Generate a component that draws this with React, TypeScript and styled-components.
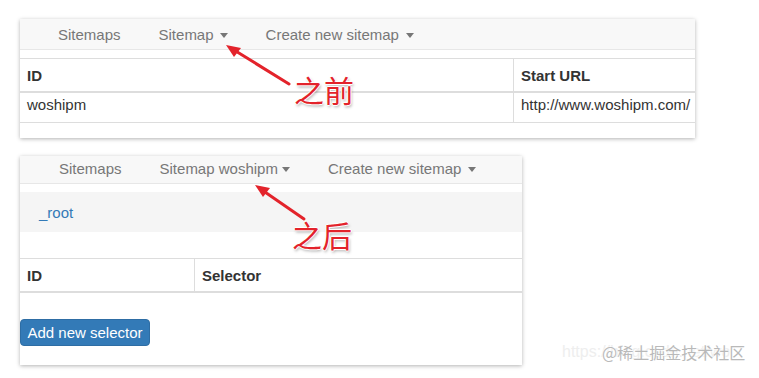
import React from 'react';
import styled, { createGlobalStyle } from 'styled-components';

const GlobalStyle = createGlobalStyle`
  html, body {
    margin: 0;
    padding: 0;
    background: #fff;
  }
  body {
    font-family: "Liberation Sans", Arial, sans-serif;
    color: #333;
  }
`;

export default function App() {
  return (
    <Page>
      <GlobalStyle />
      <Panel $w={675} $h={119}>
        <NavBar $h={30} $pad={19}>
          <NavLink>Sitemaps</NavLink>
          <NavLink>
            Sitemap<Caret $gap={6} />
          </NavLink>
          <NavLink>
            Create new sitemap<Caret $gap={7} />
          </NavLink>
        </NavBar>
        <Table $w={820} $top={8}>
          <colgroup>
            <col style={{ width: 493 }} />
            <col />
          </colgroup>
          <thead>
            <tr>
              <Th>ID</Th>
              <Th>Start URL</Th>
            </tr>
          </thead>
          <tbody>
            <tr>
              <Td>woshipm</Td>
              <Td>http://www.woshipm.com/ .</Td>
            </tr>
          </tbody>
        </Table>
      </Panel>

      <Panel $w={502} $h={209}>
        <NavBar $h={24} $pad={20} $lift={3}>
          <NavLink>Sitemaps</NavLink>
          <NavLink>
            Sitemap woshipm<Caret $gap={4} />
          </NavLink>
          <NavLink>
            Create new sitemap<Caret $gap={7} />
          </NavLink>
        </NavBar>
        <Breadcrumb>
          <Crumb>_root</Crumb>
        </Breadcrumb>
        <Table $w={502} $top={26}>
          <colgroup>
            <col style={{ width: 174 }} />
            <col />
          </colgroup>
          <thead>
            <tr>
              <Th>ID</Th>
              <Th>Selector</Th>
            </tr>
          </thead>
        </Table>
        <PrimaryButton>Add new selector</PrimaryButton>
      </Panel>

      <Arrows width="759" height="378" viewBox="0 0 759 378">
        <line x1="289" y1="84" x2="234" y2="50" />
        <polygon points="226,45 241,48 234,57" />
        <line x1="304" y1="219" x2="262" y2="190" />
        <polygon points="255,185 270,188 263,197" />
      </Arrows>
      <Note $x={294} $y={74}>之前</Note>
      <Note $x={292} $y={219}>之后</Note>

      <WatermarkUrl>https://blog.csdn.net/wo</WatermarkUrl>
      <Watermark>@稀土掘金技术社区</Watermark>
    </Page>
  );
}

const Page = styled.div`
  position: relative;
  width: 759px;
  height: 378px;
  box-sizing: border-box;
  padding: 19px 0 0 20px;
  display: flex;
  flex-direction: column;
  align-items: flex-start;
  gap: 18px;
  overflow: hidden;
`;

const Panel = styled.div<{ $w: number; $h: number }>`
  width: ${(p) => p.$w}px;
  height: ${(p) => p.$h}px;
  background: #fff;
  overflow: hidden;
  box-shadow: 0 1px 4px rgba(0, 0, 0, 0.3);
  display: flex;
  flex-direction: column;
  align-items: flex-start;
`;

const NavBar = styled.nav<{ $h: number; $pad: number; $lift?: number }>`
  align-self: stretch;
  height: ${(p) => p.$h}px;
  flex-shrink: 0;
  box-sizing: content-box;
  background: #f8f8f8;
  border-bottom: 1px solid #e7e7e7;
  display: flex;
  align-items: center;
  gap: 38px;
  padding: 0 0 ${(p) => p.$lift ?? 0}px ${(p) => p.$pad + 19}px;
  font-size: 15px;
`;

const NavLink = styled.span`
  color: #777;
  display: inline-flex;
  align-items: center;
  white-space: nowrap;
`;

const Caret = styled.i<{ $gap: number }>`
  display: inline-block;
  width: 0;
  height: 0;
  margin-left: ${(p) => p.$gap}px;
  margin-top: 2px;
  border-top: 5px solid #777;
  border-left: 4.5px solid transparent;
  border-right: 4.5px solid transparent;
`;

const Table = styled.table<{ $w: number; $top: number }>`
  width: ${(p) => p.$w}px;
  flex-shrink: 0;
  margin-top: ${(p) => p.$top}px;
  border-collapse: separate;
  border-spacing: 0;
  table-layout: fixed;
  font-size: 15px;
  color: #333;
`;

const Th = styled.th`
  height: 32px;
  padding: 0 8px 0 7px;
  text-align: left;
  font-weight: bold;
  border-top: 1px solid #ddd;
  border-bottom: 2px solid #ddd;
  white-space: nowrap;
  & + & {
    border-left: 1px solid #ddd;
  }
`;

const Td = styled.td`
  height: 30px;
  box-sizing: border-box;
  padding: 3px 8px 0 7px;
  line-height: 17px;
  vertical-align: top;
  border-bottom: 1px solid #ddd;
  white-space: nowrap;
  overflow: hidden;
  & + & {
    border-left: 1px solid #ddd;
  }
`;

const Breadcrumb = styled.div`
  align-self: stretch;
  flex-shrink: 0;
  height: 40px;
  margin-top: 8px;
  background: #f5f5f5;
  display: flex;
  align-items: center;
  padding-left: 19px;
  font-size: 15px;
`;

const Crumb = styled.span`
  color: #337ab7;
`;

const PrimaryButton = styled.button`
  flex-shrink: 0;
  margin-top: 26px;
  width: 130px;
  height: 27px;
  padding: 0;
  border: 1px solid #2e6da4;
  border-radius: 4px;
  background: #337ab7;
  color: #fff;
  font-family: "Liberation Sans", Arial, sans-serif;
  font-size: 15px;
  text-align: center;
`;

const Arrows = styled.svg`
  position: absolute;
  left: 0;
  top: 0;
  pointer-events: none;
  & line {
    stroke: #e3232b;
    stroke-width: 3;
    stroke-linecap: round;
  }
  & polygon {
    fill: #e3232b;
  }
`;

const Note = styled.span<{ $x: number; $y: number }>`
  position: absolute;
  left: ${(p) => p.$x}px;
  top: ${(p) => p.$y}px;
  font-family: "Noto Sans CJK SC", sans-serif;
  font-size: 30px;
  line-height: 1;
  color: #e3232b;
  text-shadow: 1px 0 0 #fff, -1px 0 0 #fff, 0 1px 0 #fff, 0 -1px 0 #fff,
    1px 2px 3px rgba(0, 0, 0, 0.35);
`;

const WatermarkUrl = styled.span`
  position: absolute;
  left: 562px;
  top: 344px;
  font-family: "Liberation Sans", Arial, sans-serif;
  font-size: 16px;
  line-height: 1;
  color: #eeeeee;
  white-space: nowrap;
`;

const Watermark = styled.span`
  position: absolute;
  left: 602px;
  top: 344px;
  font-family: "Noto Sans CJK SC", sans-serif;
  font-size: 16px;
  line-height: 1;
  color: #b9b9b9;
  text-shadow: 0 0 2px #fff, 0 0 2px #fff;
  white-space: nowrap;
`;
